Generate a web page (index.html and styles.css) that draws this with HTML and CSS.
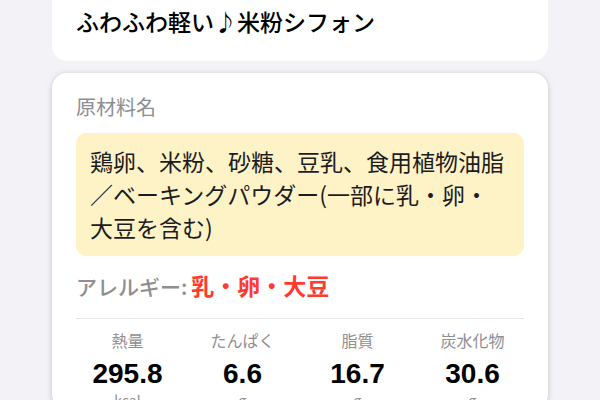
FILE: index.html
```html
<!DOCTYPE html>
<html lang="ja">
<head>
<meta charset="utf-8">
<link rel="stylesheet" href="styles.css">
</head>
<body>
<main class="page">
  <section class="card card-title">
    <h1 class="title">ふわふわ軽い♪米粉シフォン</h1>
  </section>
  <section class="card card-info">
    <div class="label">原材料名</div>
    <div class="ingredients">鶏卵、米粉、砂糖、豆乳、食用植物油脂／ベーキングパウダー(一部に乳・卵・大豆を含む)</div>
    <div class="allergy"><span class="allergy-label">アレルギー:</span><span class="allergy-value">乳・卵・大豆</span></div>
    <div class="divider"></div>
    <div class="nutrition">
      <div class="nut"><div class="nut-label">熱量</div><div class="nut-value">295.8</div><div class="nut-unit">kcal</div></div>
      <div class="nut"><div class="nut-label">たんぱく</div><div class="nut-value">6.6</div><div class="nut-unit">g</div></div>
      <div class="nut"><div class="nut-label">脂質</div><div class="nut-value">16.7</div><div class="nut-unit">g</div></div>
      <div class="nut"><div class="nut-label">炭水化物</div><div class="nut-value">30.6</div><div class="nut-unit">g</div></div>
    </div>
  </section>
</main>
</body>
</html>
```
FILE: styles.css
```css
* { box-sizing: border-box; }
html, body { margin: 0; padding: 0; }
body {
  background: #f2f2f7;
  font-family: "Noto Sans CJK JP", "Noto Sans", sans-serif;
  color: #000;
  height: 400px;
  overflow: hidden;
}
.page {
  padding: 0 52px;
  display: flex;
  flex-direction: column;
  gap: 12px;
}
.card {
  background: #fff;
  border-radius: 15px;
}
.card-title {
  border-radius: 0 0 15px 15px;
  padding: 6px 24px 25px;
}
.title {
  margin: 0;
  font-size: 23px;
  line-height: 30px;
  font-weight: 500;
}
.card-info {
  padding: 20px 24px 0;
  box-shadow: 0 1px 6px rgba(0,0,0,0.18);
}
.label {
  font-size: 20px;
  line-height: 28px;
  color: #8e8e93;
}
.ingredients {
  margin-top: 12px;
  background: #fef3c7;
  border-radius: 10px;
  padding: 12px 14px;
  font-size: 23px;
  line-height: 33px;
  color: #1c1c1e;
}
.allergy {
  margin-top: 13px;
  line-height: 32px;
  display: flex;
  align-items: baseline;
}
.allergy-label {
  font-size: 21px;
  color: #8e8e93;
  font-weight: 500;
}
.allergy-value {
  font-size: 23px;
  color: #ff3b30;
  font-weight: 700;
  margin-left: 4px;
}
.divider {
  margin-top: 16px;
  height: 1px;
  background: #e5e5ea;
}
.nutrition {
  display: grid;
  grid-template-columns: repeat(4, 1fr);
  padding-top: 11px;
  margin: 0 -6px 0 -6px;
}
.nut {
  display: flex;
  flex-direction: column;
  align-items: center;
}
.nut-label {
  font-size: 16px;
  line-height: 20px;
  color: #8e8e93;
}
.nut-value {
  margin-top: 7px;
  font-family: "Liberation Sans", "Noto Sans", sans-serif;
  font-size: 28px;
  line-height: 34px;
  font-weight: 700;
}
.nut-unit {
  font-size: 14px;
  line-height: 18px;
  color: #8e8e93;
}
```
